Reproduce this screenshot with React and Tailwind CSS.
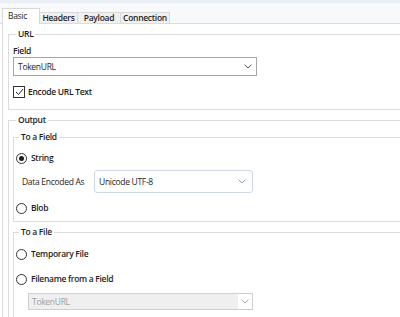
import React from 'react';

const Chevron = ({ className }) => (
  <svg width="8" height="5" viewBox="0 0 8 5" className={className}>
    <path d="M0.5 0.5 L4 4 L7.5 0.5" fill="none" stroke="currentColor" strokeWidth="1" />
  </svg>
);

const Radio = ({ checked }) => (
  <span className="flex h-[11px] w-[11px] shrink-0 items-center justify-center rounded-full border border-[#333] bg-white">
    {checked && <span className="h-[5px] w-[5px] rounded-full bg-[#1e1e1e]" />}
  </span>
);

const GroupBox = ({ title, className, children }) => (
  <fieldset className={`border border-[#dcdcdc] ${className}`}>
    <legend className="ml-[3px] px-[2px] font-semibold leading-[12px]">{title}</legend>
    {children}
  </fieldset>
);

const tabs = [
  { label: 'Headers', w: 'w-[38px]' },
  { label: 'Payload', w: 'w-[43px]' },
  { label: 'Connection', w: 'w-[49px]' },
];

export default function App() {
  return (
    <div
      className="h-[317px] w-[400px] overflow-hidden bg-white text-[8.5px] leading-[12px] tracking-[-0.3px] text-[#1e1e1e]"
      style={{ fontFamily: '"Open Sans", "Noto Sans", sans-serif' }}
    >
      {/* tab strip */}
      <div className="flex h-[24px] items-end border-t-[3px] border-b border-t-[#eaeff6] border-b-[#dcdcdc] bg-[#f8f9fb] pl-[2px]">
        <div className="relative z-10 -mb-px h-[16px] w-[38px] border-x border-t border-[#d9d9d9] bg-white pl-[5px] pt-[1px]">
          Basic
        </div>
        {tabs.map((t) => (
          <div
            key={t.label}
            className={`flex h-[11px] items-center justify-center border-t border-r border-[#d9d9d9] bg-[#f0f0f0] font-semibold ${t.w}`}
          >
            {t.label}
          </div>
        ))}
      </div>

      {/* tab page */}
      <div className="ml-[2px] h-[300px] border-l border-[#dcdcdc] pl-[5px] pt-[4px]">
        <GroupBox title="URL" className="w-[420px] pb-[11px] pl-[4px]">
          <div className="mt-[5px] font-semibold">Field</div>
          <div className="flex h-[19px] w-[244px] items-center justify-between border border-[#a6a6a6] bg-white pl-[4px] pr-[4px]">
            <span>TokenURL</span>
            <Chevron className="text-[#555]" />
          </div>
          <label className="mt-[10px] flex items-center gap-[3px] font-semibold">
            <span className="flex h-[12px] w-[12px] items-center justify-center border border-[#333] bg-white">
              <svg width="9" height="8" viewBox="0 0 9 8">
                <path d="M1 4 L3.5 6.5 L8 1" fill="none" stroke="#222" strokeWidth="1" />
              </svg>
            </span>
            Encode URL Text
          </label>
        </GroupBox>

        <GroupBox title="Output" className="mt-[4px] h-[260px] w-[420px] pl-[4px]">
          <GroupBox title="To a Field" className="mt-[5px] pb-[7px] pl-[2px]">
            <div className="mt-[9px] flex h-[12px] items-center gap-[4px] font-semibold">
              <Radio checked />
              String
            </div>
            <div className="mt-[6px] flex items-center">
              <span className="ml-[6px] w-[72px]">Data Encoded As</span>
              <div className="flex h-[23px] w-[159px] items-center justify-between rounded-[3px] border border-[#cfd7e6] bg-white pl-[4px] pr-[6px]">
                <span>Unicode UTF-8</span>
                <Chevron className="text-[#8c9cc0]" />
              </div>
            </div>
            <div className="mt-[9px] flex h-[12px] items-center gap-[4px] font-semibold">
              <Radio />
              Blob
            </div>
          </GroupBox>

          <GroupBox title="To a File" className="mt-[4px] h-[120px] pl-[2px]">
            <div className="mt-[10px] flex h-[12px] items-center gap-[4px] font-semibold">
              <Radio />
              Temporary File
            </div>
            <div className="mt-[13px] flex h-[12px] items-center gap-[4px] font-semibold">
              <Radio />
              Filename from a Field
            </div>
            <div className="ml-[12px] mt-[8px] flex h-[17px] w-[225px] border border-[#cfcfcf] bg-[#efefef]">
              <span className="flex-1 pl-[3px] leading-[15px] text-[#a0a0a0]">TokenURL</span>
              <span className="flex w-[14px] items-center justify-center bg-white">
                <Chevron className="text-[#aaa]" />
              </span>
            </div>
          </GroupBox>
        </GroupBox>
      </div>
    </div>
  );
}
